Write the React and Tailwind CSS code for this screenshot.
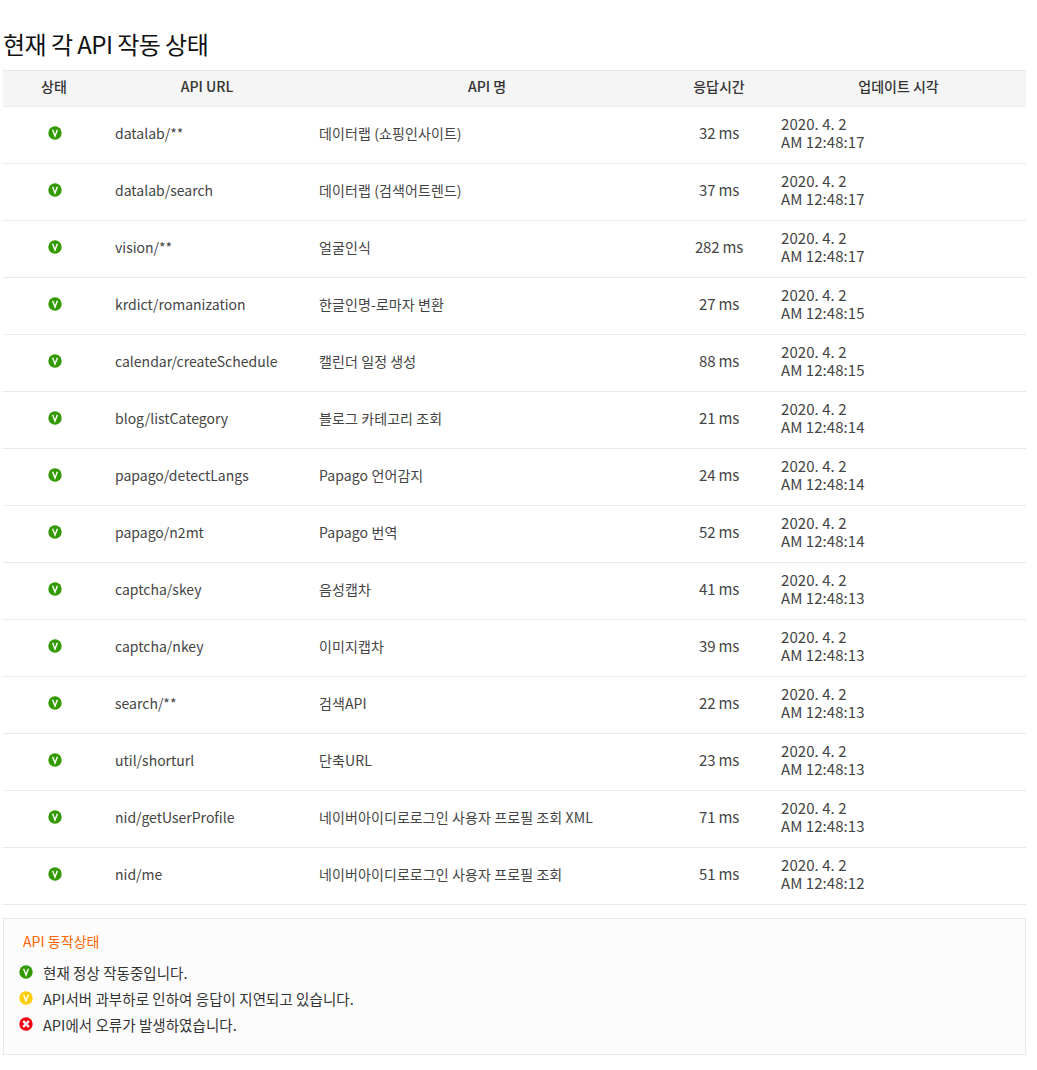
import React from "react";

const rows = [
  ["datalab/**", "데이터랩 (쇼핑인사이트)", "32 ms", "AM 12:48:17"],
  ["datalab/search", "데이터랩 (검색어트렌드)", "37 ms", "AM 12:48:17"],
  ["vision/**", "얼굴인식", "282 ms", "AM 12:48:17"],
  ["krdict/romanization", "한글인명-로마자 변환", "27 ms", "AM 12:48:15"],
  ["calendar/createSchedule", "캘린더 일정 생성", "88 ms", "AM 12:48:15"],
  ["blog/listCategory", "블로그 카테고리 조회", "21 ms", "AM 12:48:14"],
  ["papago/detectLangs", "Papago 언어감지", "24 ms", "AM 12:48:14"],
  ["papago/n2mt", "Papago 번역", "52 ms", "AM 12:48:14"],
  ["captcha/skey", "음성캡차", "41 ms", "AM 12:48:13"],
  ["captcha/nkey", "이미지캡차", "39 ms", "AM 12:48:13"],
  ["search/**", "검색API", "22 ms", "AM 12:48:13"],
  ["util/shorturl", "단축URL", "23 ms", "AM 12:48:13"],
  ["nid/getUserProfile", "네이버아이디로로그인 사용자 프로필 조회 XML", "71 ms", "AM 12:48:13"],
  ["nid/me", "네이버아이디로로그인 사용자 프로필 조회", "51 ms", "AM 12:48:12"],
];

const StatusIcon = ({ color, type = "v" }) => (
  <svg width="14" height="14" viewBox="0 0 14 14" className="block">
    <circle cx="7" cy="7" r="6.7" fill={color} />
    {type === "v" ? (
      <path d="M4.6 3.8 L7 10 L9.4 3.8" fill="none" stroke="#fff" strokeWidth="1.4" />
    ) : (
      <path d="M4.2 4 L9.8 10 M9.8 4 L4.2 10" fill="none" stroke="#fff" strokeWidth="2.4" />
    )}
  </svg>
);

const App = () => {
  return (
    <div className="w-[1037px] h-[1070px] bg-white pt-[26px] pl-[3px] font-['Noto_Sans_CJK_KR',sans-serif] text-[#333] overflow-hidden">
      <h2 className="text-[24px] leading-[36px] font-normal text-[#111] tracking-[-0.55px] mb-[8px]">
        현재 각 API 작동 상태
      </h2>
      <div className="w-[1023px]">
        <div className="grid grid-cols-[102px_204px_358px_104px_255px] h-[37px] items-center bg-[#f5f5f5] border-y border-[#e9e9e9] text-center text-[14px] font-medium text-[#333]">
          <div className="pb-[4px]">상태</div>
          <div className="pb-[4px]">API URL</div>
          <div className="pb-[4px] pr-[2px]">API 명</div>
          <div className="pb-[4px]">응답시간</div>
          <div className="pb-[4px]">업데이트 시각</div>
        </div>
        {rows.map((row) => (
          <div
            key={row[0]}
            className="grid grid-cols-[102px_204px_358px_104px_255px] h-[57px] items-center border-b border-[#e9e9e9] text-[14px] text-[#444]"
          >
            <div className="flex justify-center pb-[5px] pl-[1px]">
              <StatusIcon color="#339900" />
            </div>
            <div className="pl-[10px] pb-[4px]">{row[0]}</div>
            <div className="pl-[10px] pb-[4px] tracking-[0.1px]">{row[1]}</div>
            <div className="text-center text-[15px] tracking-[-0.2px] pb-[4px]">{row[2]}</div>
            <div className="pl-[10px] pb-[5px] leading-[18px] text-[15px] tracking-[0.05px]">
              <div>2020. 4. 2</div>
              <div>{row[3]}</div>
            </div>
          </div>
        ))}
        <div className="mt-[13px] h-[137px] bg-[#fcfcfc] border border-[#e9e9e9] pl-[15px] pt-[12px] text-[14.5px] tracking-[0.05px] text-[#333]">
          <div className="pl-[4px] mb-[7px] leading-[21px] text-[14px] text-[#ff6600]">API 동작상태</div>
          <div className="flex flex-col">
            {[
              ["#339900", "v", "현재 정상 작동중입니다."],
              ["#ffcc00", "v", "API서버 과부하로 인하여 응답이 지연되고 있습니다."],
              ["#ee0011", "x", "API에서 오류가 발생하였습니다."],
            ].map(([color, type, text]) => (
              <div key={text} className="flex items-center h-[26px] gap-[10px]">
                <StatusIcon color={color} type={type} />
                <span className="mt-[2px]">{text}</span>
              </div>
            ))}
          </div>
        </div>
      </div>
    </div>
  );
};

export default App;
